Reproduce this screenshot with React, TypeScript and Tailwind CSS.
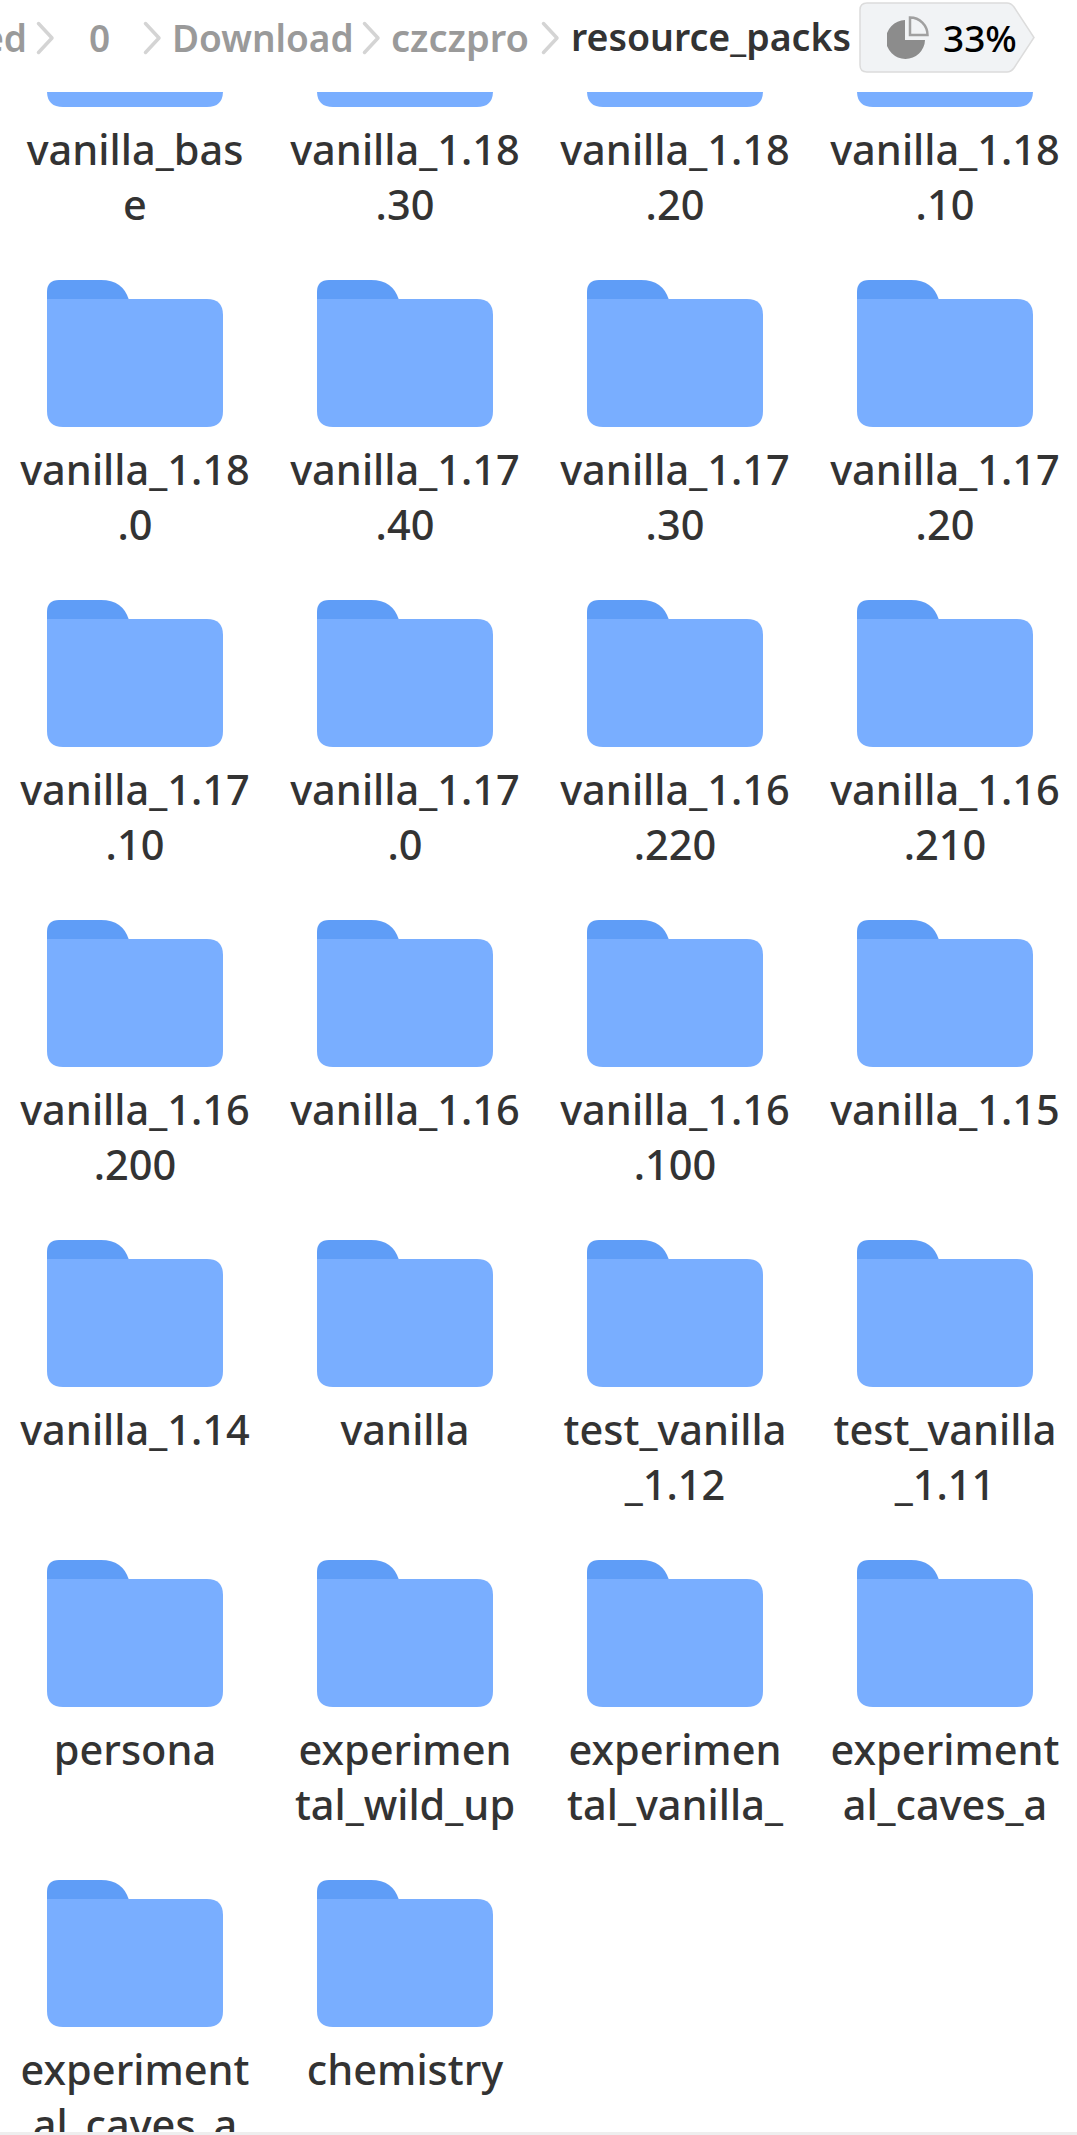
const folders: string[][] = [
  ["vanilla_bas", "e"],
  ["vanilla_1.18", ".30"],
  ["vanilla_1.18", ".20"],
  ["vanilla_1.18", ".10"],
  ["vanilla_1.18", ".0"],
  ["vanilla_1.17", ".40"],
  ["vanilla_1.17", ".30"],
  ["vanilla_1.17", ".20"],
  ["vanilla_1.17", ".10"],
  ["vanilla_1.17", ".0"],
  ["vanilla_1.16", ".220"],
  ["vanilla_1.16", ".210"],
  ["vanilla_1.16", ".200"],
  ["vanilla_1.16"],
  ["vanilla_1.16", ".100"],
  ["vanilla_1.15"],
  ["vanilla_1.14"],
  ["vanilla"],
  ["test_vanilla", "_1.12"],
  ["test_vanilla", "_1.11"],
  ["persona"],
  ["experimen", "tal_wild_up"],
  ["experimen", "tal_vanilla_"],
  ["experiment", "al_caves_a"],
  ["experiment", "al_caves_a"],
  ["chemistry"],
];

const Chevron = () => (
  <svg width="19" height="34" viewBox="0 0 19 34" fill="none" className="block shrink-0">
    <path d="M2.5 2.5 L16 17 L2.5 31.5" stroke="#d4d4d4" strokeWidth="3.5" strokeLinecap="round" strokeLinejoin="round" />
  </svg>
);

const FolderIcon = () => (
  <svg width="176" height="147" viewBox="0 0 176 147">
    <path d="M0 20 V12 Q0 0 12 0 H54 Q76 0 82 20 Z" fill="#5f9df7" />
    <path d="M0 19 H160 Q176 19 176 35 V131 Q176 147 160 147 H16 Q0 147 0 131 Z" fill="#79aeff" />
  </svg>
);

const Badge = () => (
  <div className="relative flex h-[71px] w-[177px] shrink-0 items-center pl-[28px]">
    <svg width="177" height="71" viewBox="0 0 177 71" className="absolute left-0 top-0">
      <path
        d="M8 1 H148 Q152 1 155 5 L175 35.5 L155 66 Q152 70 148 70 H8 Q1 70 1 63 V8 Q1 1 8 1 Z"
        fill="#f1f3f5"
        stroke="#dcdcdc"
        strokeWidth="1.5"
      />
    </svg>
    <svg width="42" height="43" viewBox="0 0 42 43" className="relative shrink-0">
      <path d="M18 4 A19.5 19.5 0 1 0 38 24 H18 Z" fill="#8c8c8c" />
      <path d="M23 1.5 A17.5 17.5 0 0 1 40.5 19 H23 Z" fill="#f1f3f5" stroke="#a0a0a0" strokeWidth="2.5" />
    </svg>
    <span className="relative ml-[14px] text-[37px] font-medium text-black">33%</span>
  </div>
);

const Breadcrumb = () => (
  <div className="flex h-[92px] shrink-0 items-start overflow-hidden whitespace-nowrap bg-white pt-[2px] text-[37px] font-semibold text-[#9a9a9a]">
    <div className="flex h-[71px] items-center">
      <span className="ml-[-38px] w-[65px] text-right">ed</span>
      <span className="ml-[9px]"><Chevron /></span>
      <span className="ml-[34px] w-[21px] text-center">0</span>
      <span className="ml-[33px]"><Chevron /></span>
      <span className="ml-[10px] w-[179px]">Download</span>
      <span className="ml-[11px]"><Chevron /></span>
      <span className="ml-[10px] w-[137px] text-[38px]">czczpro</span>
      <span className="ml-[13px]"><Chevron /></span>
      <span className="ml-[11px] w-[279px] text-[37.5px] text-[#333333]">resource_packs</span>
      <span className="ml-[9px]"><Badge /></span>
    </div>
  </div>
);

const FolderItem = ({ lines }: { lines: string[] }) => (
  <div className="flex h-[320px] flex-col items-center">
    <FolderIcon />
    <div className="mt-[15px] text-center text-[41.5px] font-medium leading-[55px] text-[#333333]">
      {lines.map((line, index) => (
        <div key={index}>{line}</div>
      ))}
    </div>
  </div>
);

const App = () => {
  return (
    <div className="flex h-[2135px] w-[1077px] flex-col overflow-hidden bg-white font-['Noto_Sans',sans-serif]">
      <Breadcrumb />
      <div className="min-h-0 flex-1 overflow-hidden border-b-[3px] border-[#eeeeee]">
        <div className="mt-[-132px] grid grid-cols-[270px_270px_270px_270px]">
          {folders.map((lines, index) => (
            <FolderItem lines={lines} key={index} />
          ))}
        </div>
      </div>
    </div>
  );
};

export default App;
